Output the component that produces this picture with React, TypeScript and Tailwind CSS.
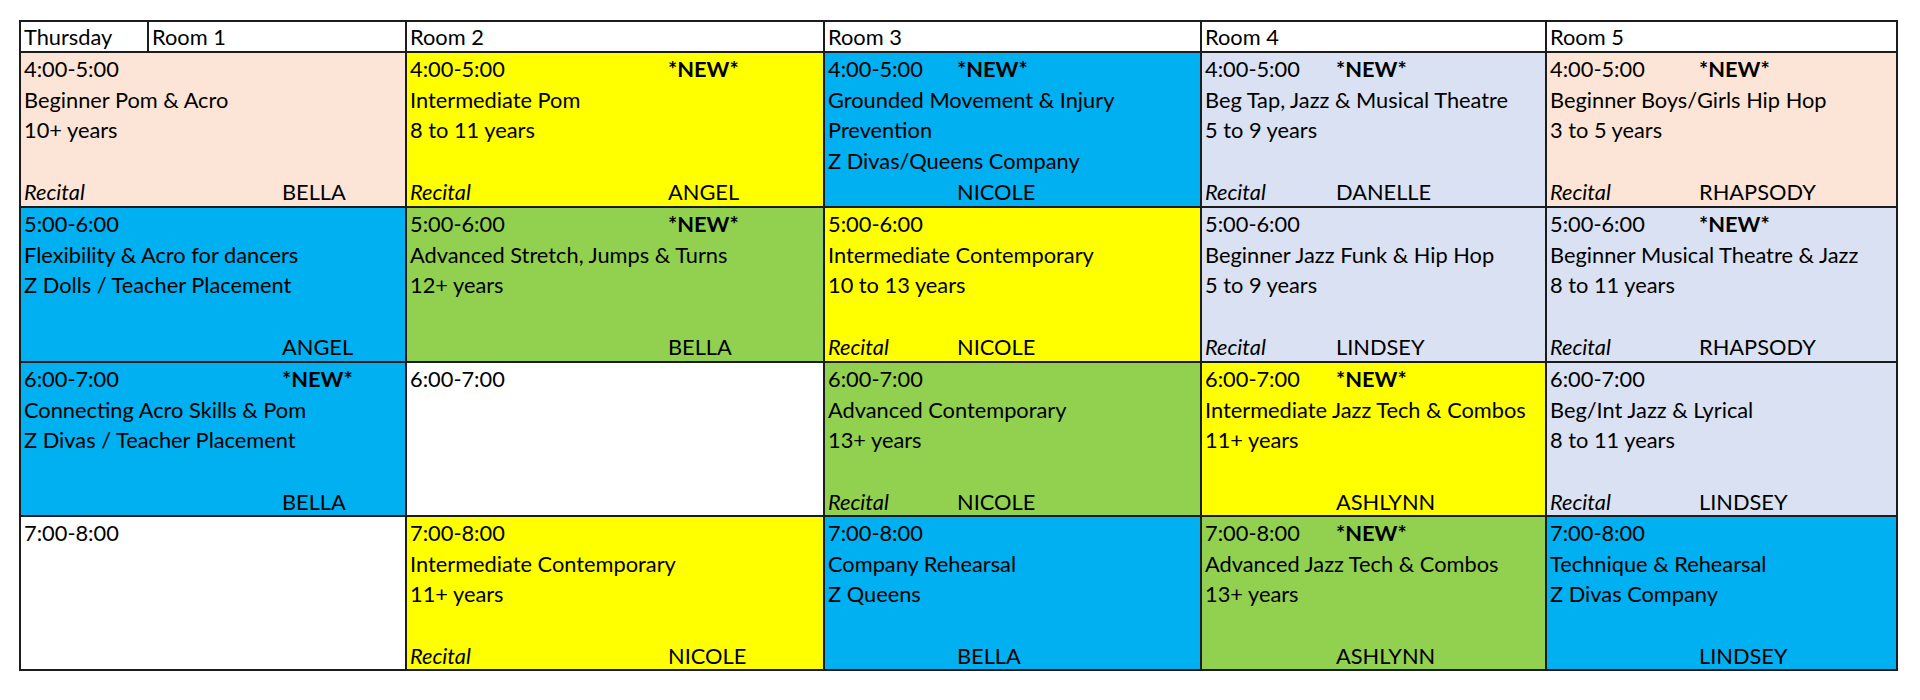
type Line = [string, string?]

interface Cell {
  bg: string
  lines: Line[]
}

// room columns: width of the box and where the second text column begins
const ROOMS = [
  { name: 'Room 1', split: 'w-[258px]' },
  { name: 'Room 2', split: 'w-[258px]' },
  { name: 'Room 3', split: 'w-[129px]' },
  { name: 'Room 4', split: 'w-[131px]' },
  { name: 'Room 5', split: 'w-[149px]' },
]

const PEACH = 'bg-[#fce4d6]'
const YELLOW = 'bg-[#ffff00]'
const BLUE = 'bg-[#00b0f0]'
const GREEN = 'bg-[#92d050]'
const GREY = 'bg-[#d9e1f2]'
const WHITE = 'bg-white'

const ROWS: { height: string; cells: Cell[] }[] = [
  {
    height: 'h-[155px]',
    cells: [
      { bg: PEACH, lines: [['4:00-5:00'], ['Beginner Pom & Acro'], ['10+ years'], [''], ['Recital', 'BELLA']] },
      { bg: YELLOW, lines: [['4:00-5:00', '*NEW*'], ['Intermediate Pom'], ['8 to 11 years'], [''], ['Recital', 'ANGEL']] },
      { bg: BLUE, lines: [['4:00-5:00', '*NEW*'], ['Grounded Movement & Injury'], ['Prevention'], ['Z Divas/Queens Company'], ['', 'NICOLE']] },
      { bg: GREY, lines: [['4:00-5:00', '*NEW*'], ['Beg Tap, Jazz & Musical Theatre'], ['5 to 9 years'], [''], ['Recital', 'DANELLE']] },
      { bg: PEACH, lines: [['4:00-5:00', '*NEW*'], ['Beginner Boys/Girls Hip Hop'], ['3 to 5 years'], [''], ['Recital', 'RHAPSODY']] },
    ],
  },
  {
    height: 'h-[155px]',
    cells: [
      { bg: BLUE, lines: [['5:00-6:00'], ['Flexibility & Acro for dancers'], ['Z Dolls / Teacher Placement'], [''], ['', 'ANGEL']] },
      { bg: GREEN, lines: [['5:00-6:00', '*NEW*'], ['Advanced Stretch, Jumps & Turns'], ['12+ years'], [''], ['', 'BELLA']] },
      { bg: YELLOW, lines: [['5:00-6:00'], ['Intermediate Contemporary'], ['10 to 13 years'], [''], ['Recital', 'NICOLE']] },
      { bg: GREY, lines: [['5:00-6:00'], ['Beginner Jazz Funk & Hip Hop'], ['5 to 9 years'], [''], ['Recital', 'LINDSEY']] },
      { bg: GREY, lines: [['5:00-6:00', '*NEW*'], ['Beginner Musical Theatre & Jazz'], ['8 to 11 years'], [''], ['Recital', 'RHAPSODY']] },
    ],
  },
  {
    height: 'h-[154px]',
    cells: [
      { bg: BLUE, lines: [['6:00-7:00', '*NEW*'], ['Connecting Acro Skills & Pom'], ['Z Divas / Teacher Placement'], [''], ['', 'BELLA']] },
      { bg: WHITE, lines: [['6:00-7:00']] },
      { bg: GREEN, lines: [['6:00-7:00'], ['Advanced Contemporary'], ['13+ years'], [''], ['Recital', 'NICOLE']] },
      { bg: YELLOW, lines: [['6:00-7:00', '*NEW*'], ['Intermediate Jazz Tech & Combos'], ['11+ years'], [''], ['', 'ASHLYNN']] },
      { bg: GREY, lines: [['6:00-7:00'], ['Beg/Int Jazz & Lyrical'], ['8 to 11 years'], [''], ['Recital', 'LINDSEY']] },
    ],
  },
  {
    height: 'h-[154px]',
    cells: [
      { bg: WHITE, lines: [['7:00-8:00']] },
      { bg: YELLOW, lines: [['7:00-8:00'], ['Intermediate Contemporary'], ['11+ years'], [''], ['Recital', 'NICOLE']] },
      { bg: BLUE, lines: [['7:00-8:00'], ['Company Rehearsal'], ['Z Queens'], [''], ['', 'BELLA']] },
      { bg: GREEN, lines: [['7:00-8:00', '*NEW*'], ['Advanced Jazz Tech & Combos'], ['13+ years'], [''], ['', 'ASHLYNN']] },
      { bg: BLUE, lines: [['7:00-8:00'], ['Technique & Rehearsal'], ['Z Divas Company'], [''], ['', 'LINDSEY']] },
    ],
  },
]

function ClassCell({ cell, split, height }: { cell: Cell; split: string; height: string }) {
  return (
    <div className={`${cell.bg} ${height} overflow-hidden border-r-2 border-b-2 border-[#1c1c1c] pt-[1px] pl-[3px]`}>
      {cell.lines.map(([left, right], i) => (
        <div key={i} className="flex h-[30.7px] leading-[30.7px] whitespace-nowrap">
          <span className={`${right ? split : ''} shrink-0 ${left === 'Recital' ? 'italic' : ''}`}>{left || '\u00a0'}</span>
          {right && <span className={right === '*NEW*' ? 'font-bold' : ''}>{right}</span>}
        </div>
      ))}
    </div>
  )
}

export default function App() {
  return (
    <div className="min-h-[700px] w-[1920px] bg-white pt-[20px] pl-[19px] font-['Lato',sans-serif] text-[21.8px] text-black">
      <div className="grid w-fit grid-cols-[386px_418px_377px_345px_351px] border-t-2 border-l-2 border-[#1c1c1c]">
        {/* header */}
        <div className="flex h-[31px] border-r-2 border-b-2 border-[#1c1c1c] leading-[30px]">
          <span className="w-[128px] shrink-0 border-r-2 border-[#1c1c1c] pl-[3px]">Thursday</span>
          <span className="pl-[3px]">Room 1</span>
        </div>
        {ROOMS.slice(1).map((room) => (
          <div key={room.name} className="h-[31px] border-r-2 border-b-2 border-[#1c1c1c] pl-[3px] leading-[30px]">
            {room.name}
          </div>
        ))}

        {ROWS.map((row, r) =>
          row.cells.map((cell, c) => (
            <ClassCell key={`${r}-${c}`} cell={cell} split={ROOMS[c].split} height={row.height} />
          )),
        )}
      </div>
    </div>
  )
}
